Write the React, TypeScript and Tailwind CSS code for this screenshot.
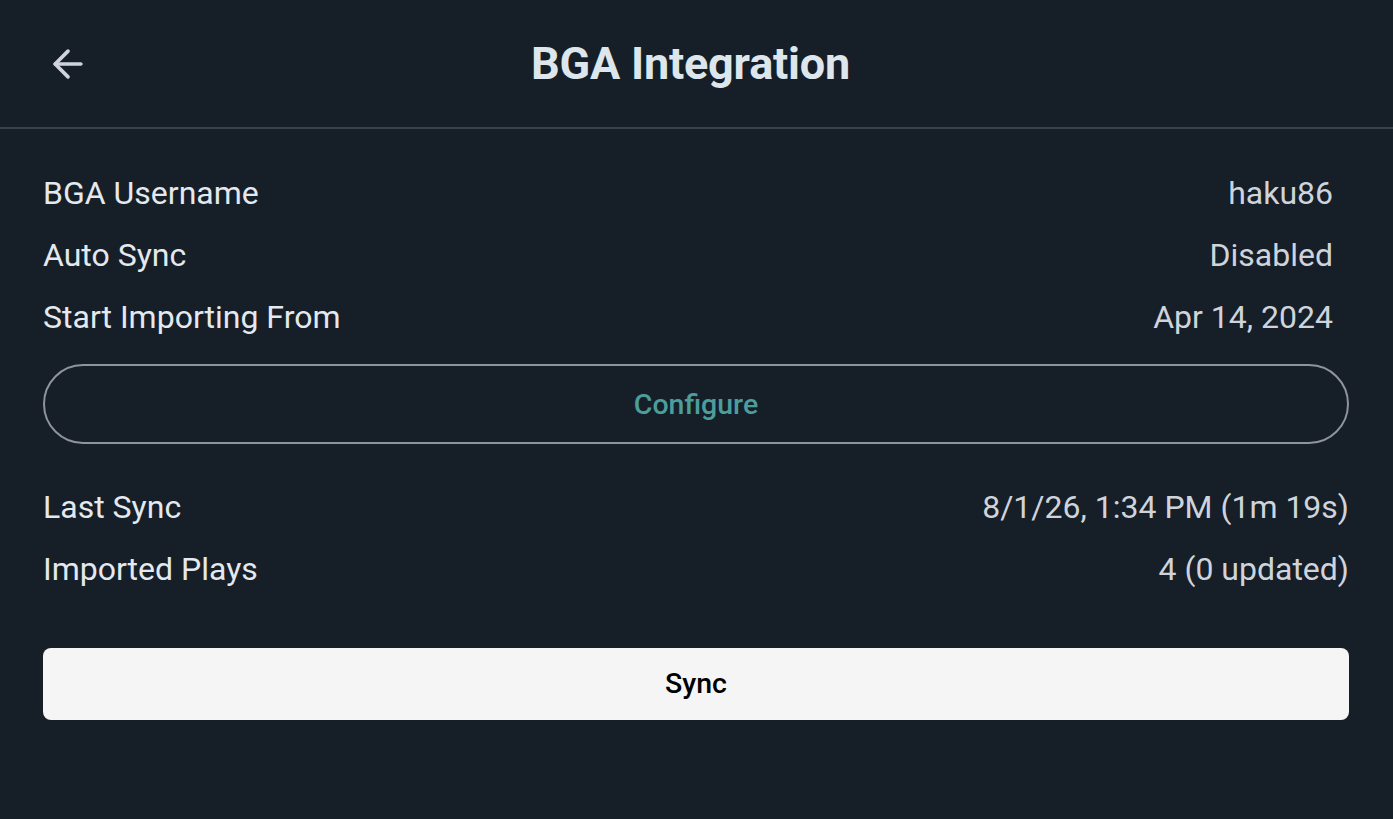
import React from "react";
import { ArrowLeft } from "lucide-react";

type Row = { label: string; value: string };

const SETTINGS: Row[] = [
  { label: "BGA Username", value: "haku86" },
  { label: "Auto Sync", value: "Disabled" },
  { label: "Start Importing From", value: "Apr 14, 2024" },
];

const STATUS: Row[] = [
  { label: "Last Sync", value: "8/1/26, 1:34 PM (1m 19s)" },
  { label: "Imported Plays", value: "4 (0 updated)" },
];

function InfoRow({ label, value }: Row) {
  return (
    <div className="flex items-center justify-between h-[62px]">
      <span className="text-[#e3e9ee]">{label}</span>
      <span className="text-[#cfd4dc]">{value}</span>
    </div>
  );
}

export default function App() {
  return (
    <div
      className="min-h-screen w-full bg-[#161e28] text-[32px] leading-[1.2]"
      style={{ fontFamily: "Roboto, 'Noto Sans', sans-serif" }}
    >
      <header className="relative flex items-center justify-center h-[129px] pr-[12px] border-b-2 border-[#3a424c]">
        <button className="absolute left-[46px] top-[42px] text-[#cfd3db]">
          <ArrowLeft className="w-[44px] h-[44px]" strokeWidth={2} />
        </button>
        <h1 className="text-[45px] font-bold text-[#dde6ec] tracking-[-0.2px]">BGA Integration</h1>
      </header>

      <main className="pl-[43px] pr-[44px] pt-[33px]">
        <div className="pr-[16px]">
          {SETTINGS.map((r) => (
            <InfoRow key={r.label} {...r} />
          ))}
        </div>

        <button className="mt-[16px] w-full h-[80px] rounded-full border-2 border-[#8e949c] text-[28.5px] font-medium text-[#4b9e9b]">
          <span className="relative top-[1px]">Configure</span>
        </button>

        <div className="mt-[32px]">
          {STATUS.map((r) => (
            <InfoRow key={r.label} {...r} />
          ))}
        </div>

        <button className="mt-[48px] w-full h-[72px] rounded-[8px] bg-[#f5f5f6] text-[28.5px] font-medium text-black">
          Sync
        </button>
      </main>
    </div>
  );
}
